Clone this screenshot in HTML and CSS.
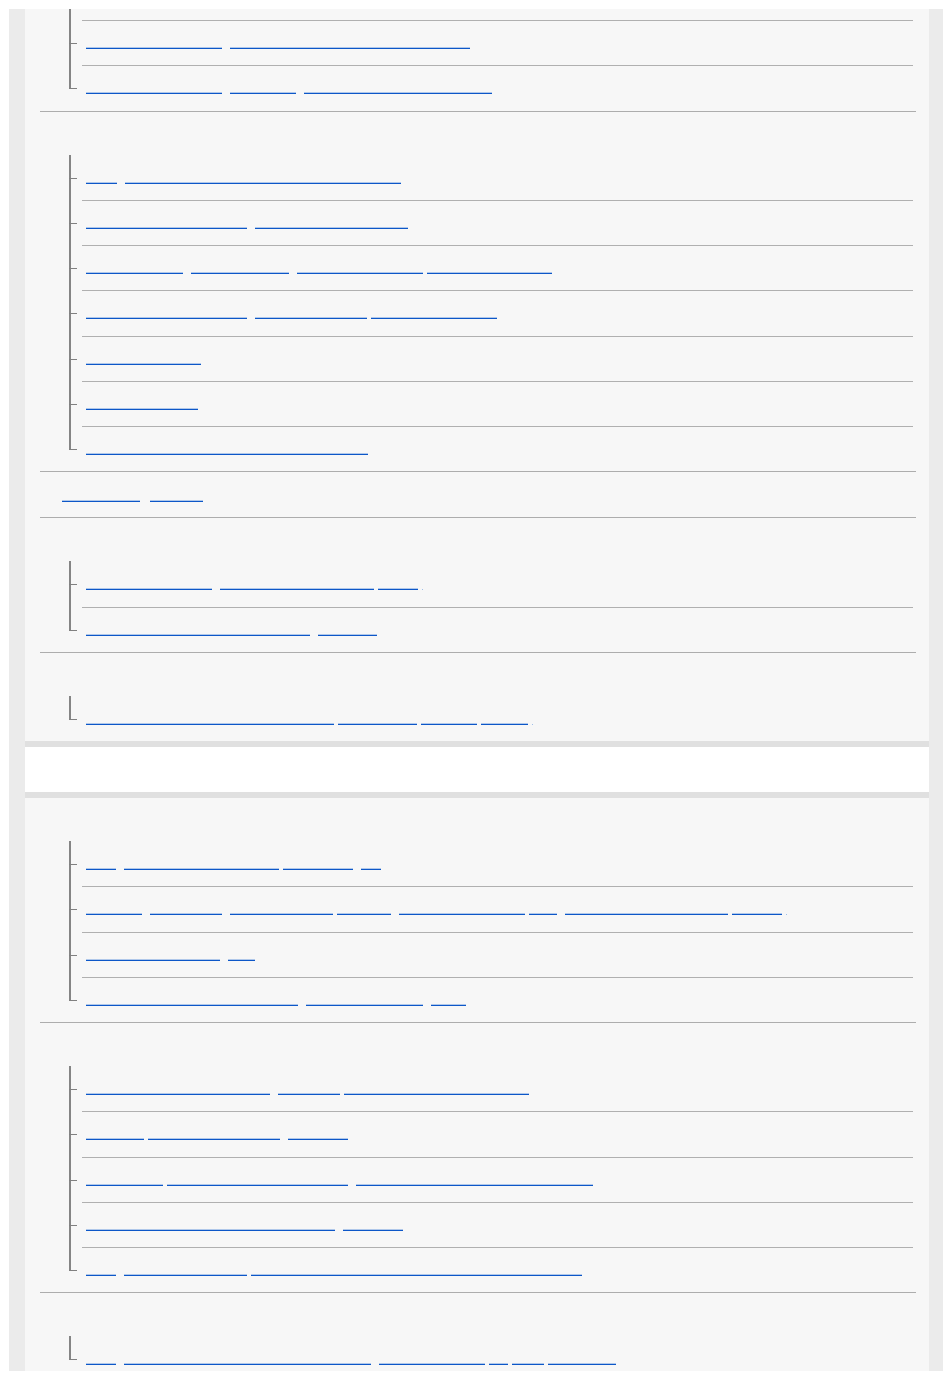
FILE: index.html
```html
<!DOCTYPE html>
<html lang="en">

<head>
    <meta charset="UTF-8">
    <meta name="viewport" content="width=device-width, initial-scale=1.0">
    <title>Contents</title>
    <link rel="stylesheet" href="styles.css">
</head>

<body>
    <div class="frame">

        <!-- first panel, scrolled part way down -->
        <div class="panel">
            <ul class="toc scrolled">
                <li>
                    <div class="head"></div>
                    <ul class="sub">
                        <li><div class="row"><a class="seg" href="#" style="width:150px"></a></div></li>
                        <li><div class="row"><a class="seg" href="#" style="width:136px"></a><a class="seg" href="#" style="width:240px"></a></div></li>
                        <li><div class="row"><a class="seg" href="#" style="width:136px"></a><a class="seg" href="#" style="width:66px"></a><a class="seg" href="#" style="width:188px"></a></div></li>
                    </ul>
                </li>
                <li>
                    <div class="head"></div>
                    <ul class="sub">
                        <li><div class="row"><a class="seg" href="#" style="width:31px"></a><a class="seg" href="#" style="width:276px"></a></div></li>
                        <li><div class="row"><a class="seg" href="#" style="width:161px"></a><a class="seg" href="#" style="width:153px"></a></div></li>
                        <li><div class="row"><a class="seg" href="#" style="width:97px"></a><a class="seg" href="#" style="width:98px"></a><a class="seg" href="#" style="width:126px"></a><a class="seg t" href="#" style="width:125px"></a></div></li>
                        <li><div class="row"><a class="seg" href="#" style="width:161px"></a><a class="seg" href="#" style="width:112px"></a><a class="seg t" href="#" style="width:126px"></a></div></li>
                        <li><div class="row"><a class="seg" href="#" style="width:115px"></a></div></li>
                        <li><div class="row"><a class="seg" href="#" style="width:112px"></a></div></li>
                        <li><div class="row"><a class="seg" href="#" style="width:282px"></a></div></li>
                    </ul>
                </li>
                <li class="leaf">
                    <div class="head"><a class="seg" href="#" style="width:78px"></a><a class="seg" href="#" style="width:53px"></a></div>
                </li>
                <li>
                    <div class="head"></div>
                    <ul class="sub">
                        <li><div class="row"><a class="seg" href="#" style="width:126px"></a><a class="seg" href="#" style="width:154px"></a><a class="seg t" href="#" style="width:40px"></a><span class="dot"></span></div></li>
                        <li><div class="row"><a class="seg" href="#" style="width:224px"></a><a class="seg" href="#" style="width:59px"></a></div></li>
                    </ul>
                </li>
                <li>
                    <div class="head"></div>
                    <ul class="sub">
                        <li><div class="row"><a class="seg" href="#" style="width:248px"></a><a class="seg t" href="#" style="width:79px"></a><a class="seg t" href="#" style="width:56px"></a><a class="seg t" href="#" style="width:47px"></a><span class="dot"></span></div></li>
                    </ul>
                </li>
            </ul>
        </div>

        <div class="band"></div>

        <!-- second panel -->
        <div class="panel grow">
            <ul class="toc">
                <li>
                    <div class="head"></div>
                    <ul class="sub">
                        <li><div class="row"><a class="seg" href="#" style="width:30px"></a><a class="seg" href="#" style="width:155px"></a><a class="seg t" href="#" style="width:70px"></a><a class="seg" href="#" style="width:20px"></a></div></li>
                        <li><div class="row"><a class="seg" href="#" style="width:56px"></a><a class="seg" href="#" style="width:72px"></a><a class="seg" href="#" style="width:103px"></a><a class="seg t" href="#" style="width:54px"></a><a class="seg" href="#" style="width:126px"></a><a class="seg t" href="#" style="width:28px"></a><a class="seg" href="#" style="width:163px"></a><a class="seg t" href="#" style="width:50px"></a><span class="dot"></span></div></li>
                        <li><div class="row"><a class="seg" href="#" style="width:134px"></a><a class="seg" href="#" style="width:27px"></a></div></li>
                        <li><div class="row"><a class="seg" href="#" style="width:212px"></a><a class="seg" href="#" style="width:117px"></a><a class="seg" href="#" style="width:35px"></a></div></li>
                    </ul>
                </li>
                <li>
                    <div class="head"></div>
                    <ul class="sub">
                        <li><div class="row"><a class="seg" href="#" style="width:184px"></a><a class="seg" href="#" style="width:62px"></a><a class="seg t" href="#" style="width:185px"></a></div></li>
                        <li><div class="row"><a class="seg" href="#" style="width:58px"></a><a class="seg t" href="#" style="width:132px"></a><a class="seg" href="#" style="width:60px"></a></div></li>
                        <li><div class="row"><a class="seg" href="#" style="width:77px"></a><a class="seg t" href="#" style="width:181px"></a><a class="seg" href="#" style="width:237px"></a></div></li>
                        <li><div class="row"><a class="seg" href="#" style="width:249px"></a><a class="seg" href="#" style="width:60px"></a></div></li>
                        <li><div class="row"><a class="seg" href="#" style="width:30px"></a><a class="seg" href="#" style="width:123px"></a><a class="seg t" href="#" style="width:331px"></a></div></li>
                    </ul>
                </li>
                <li>
                    <div class="head"></div>
                    <ul class="sub">
                        <li><div class="row"><a class="seg" href="#" style="width:30px"></a><a class="seg" href="#" style="width:247px"></a><a class="seg" href="#" style="width:106px"></a><a class="seg t" href="#" style="width:19px"></a><a class="seg t" href="#" style="width:32px"></a><a class="seg t" href="#" style="width:68px"></a></div></li>
                    </ul>
                </li>
            </ul>
        </div>

    </div>
</body>

</html>
```

FILE: styles.css
```css
body {
    margin: 9px 7px 8px 9px;
    font-family: "Liberation Sans", Arial, sans-serif;
    background-color: #fff;
}

/* grey frame round the panels */
.frame {
    height: calc(100vh - 17px);
    background-color: #ebebeb;
    padding: 0 14px 0 16px;
    display: flex;
    flex-direction: column;
    overflow: hidden;
}

.panel {
    background-color: #f7f7f7;
    overflow: hidden;
    flex: none;
}

.panel.grow {
    flex: 1;
}

/* white strip between the two panels */
.band {
    flex: none;
    height: 45px;
    background-color: #fff;
    border-top: 6px solid #e0e0e0;
    border-bottom: 6px solid #e0e0e0;
}

.toc {
    list-style: none;
    margin: 0;
    padding: 0 13px 0 15px;
}

.toc.scrolled {
    margin-top: -77.25px;
}

.toc > li {
    border-top: 1px solid #adadad;
}

.toc > li:first-child {
    border-top: none;
}

.head {
    height: 43px;
}

.leaf .head {
    height: 45px;
    box-sizing: border-box;
    padding: 29px 0 0 21.5px;
    display: flex;
    align-items: flex-start;
}

.leaf .head .seg + .seg {
    margin-left: 10px;
}

/* nested list with tree lines */
.sub {
    list-style: none;
    margin: 0 3px 0 29px;
    padding: 0;
}

.sub > li {
    position: relative;
}

.sub > li::before {
    content: "";
    position: absolute;
    left: 0;
    top: 0;
    bottom: 0;
    width: 2px;
    background-color: #858585;
}

.sub > li:last-child::before {
    bottom: auto;
    height: 24px;
}

.sub > li::after {
    content: "";
    position: absolute;
    left: 0;
    top: 23px;
    width: 8px;
    height: 1px;
    background-color: #808080;
}

.row {
    height: 45.25px;
    box-sizing: border-box;
    margin-left: 13px;
    border-top: 1px solid #b0b0b0;
    padding: 27px 0 0 3.5px;
    display: flex;
    align-items: flex-start;
}

.sub > li:first-child .row {
    border-top-color: transparent;
}

/* link underlines */
.seg {
    flex: none;
    display: block;
    height: 0;
    border-bottom: 1px solid #0d57c8;
    box-shadow: 0 -1px 0 rgba(70, 130, 215, 0.4);
    margin-left: 8px;
    text-decoration: none;
}

.seg:first-child {
    margin-left: 0;
}

.seg.t {
    margin-left: 4px;
}

.dot {
    flex: none;
    width: 1px;
    height: 0;
    border-bottom: 1px solid #9fbfea;
    margin-left: 4px;
}
```
